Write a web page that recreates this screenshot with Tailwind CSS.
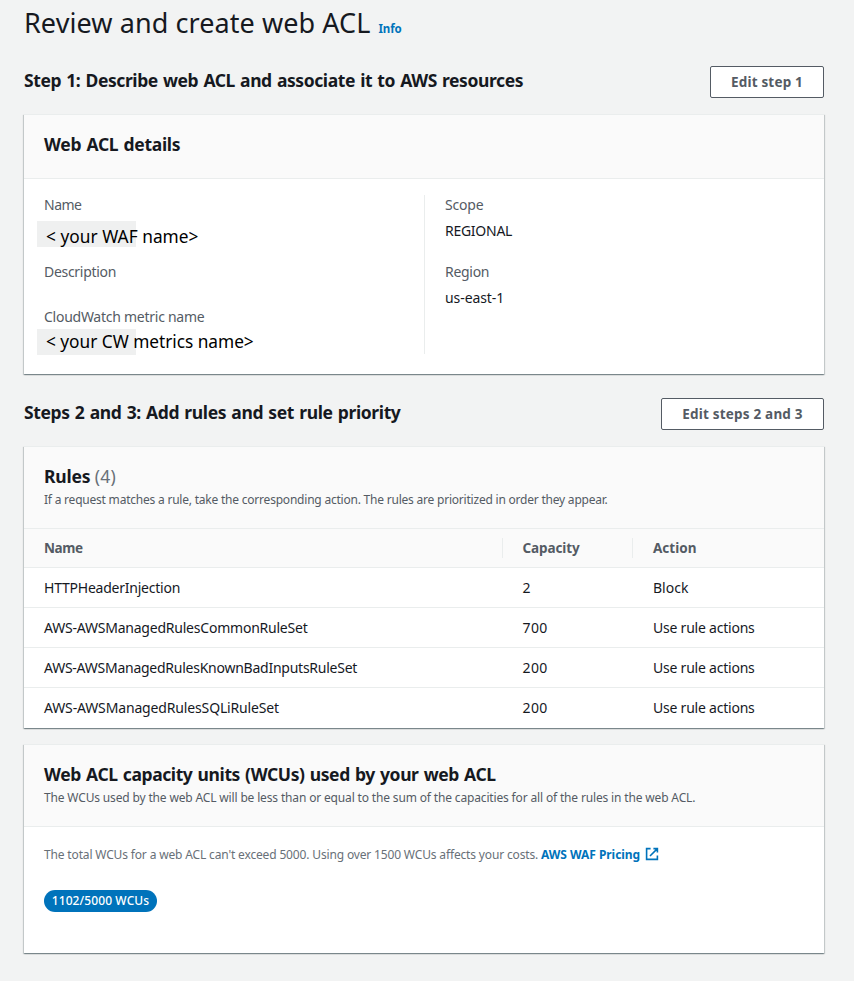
<!DOCTYPE html>
<html lang="en">
<head>
<meta charset="utf-8">
<title>Review and create web ACL</title>
<script src="https://cdn.jsdelivr.net/npm/@tailwindcss/browser@4"></script>
</head>
<body class="h-[981px] overflow-hidden bg-[#f2f3f3] pr-[30px] pl-6 font-['Noto_Sans',sans-serif] text-[14px] leading-5 text-[#16191f]">

<header class="flex h-[46px] items-baseline gap-2 pt-[3px]">
  <h1 class="text-[27px] leading-10 tracking-[0.08px]">Review and create web ACL</h1>
  <a class="text-[11.5px] font-bold tracking-[-0.1px] text-[#0073bb]">Info</a>
</header>

<div class="flex h-[68px] items-start justify-between pt-5">
  <h2 class="text-[17.5px] leading-[29px] font-bold tracking-[-0.41px] [word-spacing:1px]">Step 1: Describe web ACL and associate it to AWS resources</h2>
  <button class="h-8 w-[114px] rounded-[2px] border border-[#545b64] bg-white text-[13.5px] leading-[31px] font-bold tracking-[0.17px] text-[#545b64]">Edit step 1</button>
</div>

<section class="h-[260px] border-t border-[#eaeded] bg-white shadow-[0_1px_1px_0_rgba(0,28,36,0.3),1px_1px_1px_0_rgba(0,28,36,0.15),-1px_1px_1px_0_rgba(0,28,36,0.15)]">
  <div class="h-16 border-b border-[#eaeded] bg-[#fafafa] px-5 pt-[18px]">
    <h3 class="text-[17.5px] leading-[23px] font-bold tracking-[-0.3px] [word-spacing:1px]">Web ACL details</h3>
  </div>
  <div class="grid grid-cols-[400px_1fr] pt-4">
    <dl class="h-[159px] pl-5">
      <dt class="tracking-[-0.5px] text-[#545b64]">Name</dt>
      <dd class="mt-1.5 -ml-[7px] h-[26px] w-[99px] bg-[#eff0f0] pl-[9px] text-[17.3px] leading-[31px] tracking-[0.03px] whitespace-nowrap text-black">&lt; your WAF name&gt;</dd>
      <dt class="mt-[15px] tracking-[-0.3px] text-[#545b64]">Description</dt>
      <dd class="h-[25px]"></dd>
      <dt class="tracking-[-0.26px] text-[#545b64]">CloudWatch metric name</dt>
      <dd class="mt-0.5 -ml-[7px] h-[26px] w-[99px] bg-[#eff0f0] pl-[9px] text-[17.3px] leading-[26px] tracking-[-0.03px] whitespace-nowrap text-black">&lt; your CW metrics name&gt;</dd>
    </dl>
    <dl class="h-[159px] border-l border-[#eaeded] pl-5">
      <dt class="tracking-[-0.2px] text-[#545b64]">Scope</dt>
      <dd class="mt-1.5 tracking-[-0.27px]">REGIONAL</dd>
      <dt class="mt-[21px] tracking-[-0.3px] text-[#545b64]">Region</dt>
      <dd class="mt-1.5 tracking-[-0.08px]">us-east-1</dd>
    </dl>
  </div>
</section>

<div class="flex h-[72px] items-start justify-between pt-6">
  <h2 class="text-[17.5px] leading-[29px] font-bold tracking-[-0.37px] [word-spacing:1px]">Steps 2 and 3: Add rules and set rule priority</h2>
  <button class="h-8 w-[163px] rounded-[2px] border border-[#545b64] bg-white text-[13.5px] leading-[31px] font-bold tracking-[0.2px] text-[#545b64]">Edit steps 2 and 3</button>
</div>

<section class="h-[282px] border-t border-[#eaeded] bg-white shadow-[0_1px_1px_0_rgba(0,28,36,0.3),1px_1px_1px_0_rgba(0,28,36,0.15),-1px_1px_1px_0_rgba(0,28,36,0.15)]">
  <div class="h-[82px] border-b border-[#eaeded] bg-[#fafafa] px-5 pt-[18px]">
    <h3 class="text-[17.5px] leading-[23px] font-bold tracking-[-0.2px]">Rules <span class="font-normal tracking-[0.3px] text-[#687078]">(4)</span></h3>
    <p class="text-[12px] leading-[24px] tracking-[-0.215px] text-[#545b64]">If a request matches a rule, take the corresponding action. The rules are prioritized in order they appear.</p>
  </div>
  <div class="grid h-[39px] grid-cols-[478px_130px_1fr] items-center border-b border-[#eaeded] bg-[#fafafa] text-[13.5px] font-bold text-[#545b64]">
    <div class="pl-5 tracking-[-0.4px]">Name</div>
    <div class="border-l border-[#eaeded] pl-[19.5px] tracking-[-0.12px]">Capacity</div>
    <div class="border-l border-[#eaeded] pl-5">Action</div>
  </div>
  <div class="grid h-10 grid-cols-[478px_130px_1fr] items-center border-b border-[#eaeded]">
    <div class="pl-5 tracking-[-0.23px]">HTTPHeaderInjection</div>
    <div class="pl-[20.5px]">2</div>
    <div class="pl-[21px]">Block</div>
  </div>
  <div class="grid h-10 grid-cols-[478px_130px_1fr] items-center border-b border-[#eaeded]">
    <div class="pl-5 tracking-[-0.22px]">AWS-AWSManagedRulesCommonRuleSet</div>
    <div class="pl-[20.5px] tracking-[0.4px]">700</div>
    <div class="pl-[21px] tracking-[-0.22px]">Use rule actions</div>
  </div>
  <div class="grid h-10 grid-cols-[478px_130px_1fr] items-center border-b border-[#eaeded]">
    <div class="pl-5 tracking-[-0.25px]">AWS-AWSManagedRulesKnownBadInputsRuleSet</div>
    <div class="pl-[20.5px] tracking-[0.4px]">200</div>
    <div class="pl-[21px] tracking-[-0.22px]">Use rule actions</div>
  </div>
  <div class="grid h-10 grid-cols-[478px_130px_1fr] items-center">
    <div class="pl-5 tracking-[-0.15px]">AWS-AWSManagedRulesSQLiRuleSet</div>
    <div class="pl-[20.5px] tracking-[0.4px]">200</div>
    <div class="pl-[21px] tracking-[-0.22px]">Use rule actions</div>
  </div>
</section>

<section class="mt-4 h-[209px] border-t border-[#eaeded] bg-white shadow-[0_1px_1px_0_rgba(0,28,36,0.3),1px_1px_1px_0_rgba(0,28,36,0.15),-1px_1px_1px_0_rgba(0,28,36,0.15)]">
  <div class="h-[82px] border-b border-[#eaeded] bg-[#fafafa] px-5 pt-[18px]">
    <h3 class="text-[17.5px] leading-[23px] font-bold tracking-[-0.4px] [word-spacing:1px]">Web ACL capacity units (WCUs) used by your web ACL</h3>
    <p class="text-[12px] leading-[24px] tracking-[-0.155px] text-[#545b64]">The WCUs used by the web ACL will be less than or equal to the sum of the capacities for all of the rules in the web ACL.</p>
  </div>
  <div class="px-5 pt-[18px]">
    <div class="flex h-5 items-center text-[12px] whitespace-nowrap">
      <span class="w-[497px] tracking-[-0.155px] text-[#687078]">The total WCUs for a web ACL can't exceed 5000. Using over 1500 WCUs affects your costs.</span>
      <a class="flex items-center gap-[5px] font-bold tracking-[-0.05px] text-[#0073bb]">AWS WAF Pricing
        <svg class="-mt-0.5 h-[14px] w-[14px]" viewBox="0 0 14 14" fill="none" stroke="currentColor" stroke-width="1.6"><path d="M5.6 1.6H1.6V12.4H12.4V8.4M8.4 1.6H12.4V5.6M12.4 1.6L5 9"/></svg>
      </a>
    </div>
    <span class="mt-[25px] block h-[22px] w-[113px] rounded-full bg-[#0073bb] text-center text-[12px] leading-[21px] font-medium tracking-[0.1px] text-white">1102/5000 WCUs</span>
  </div>
</section>

</body>
</html>
